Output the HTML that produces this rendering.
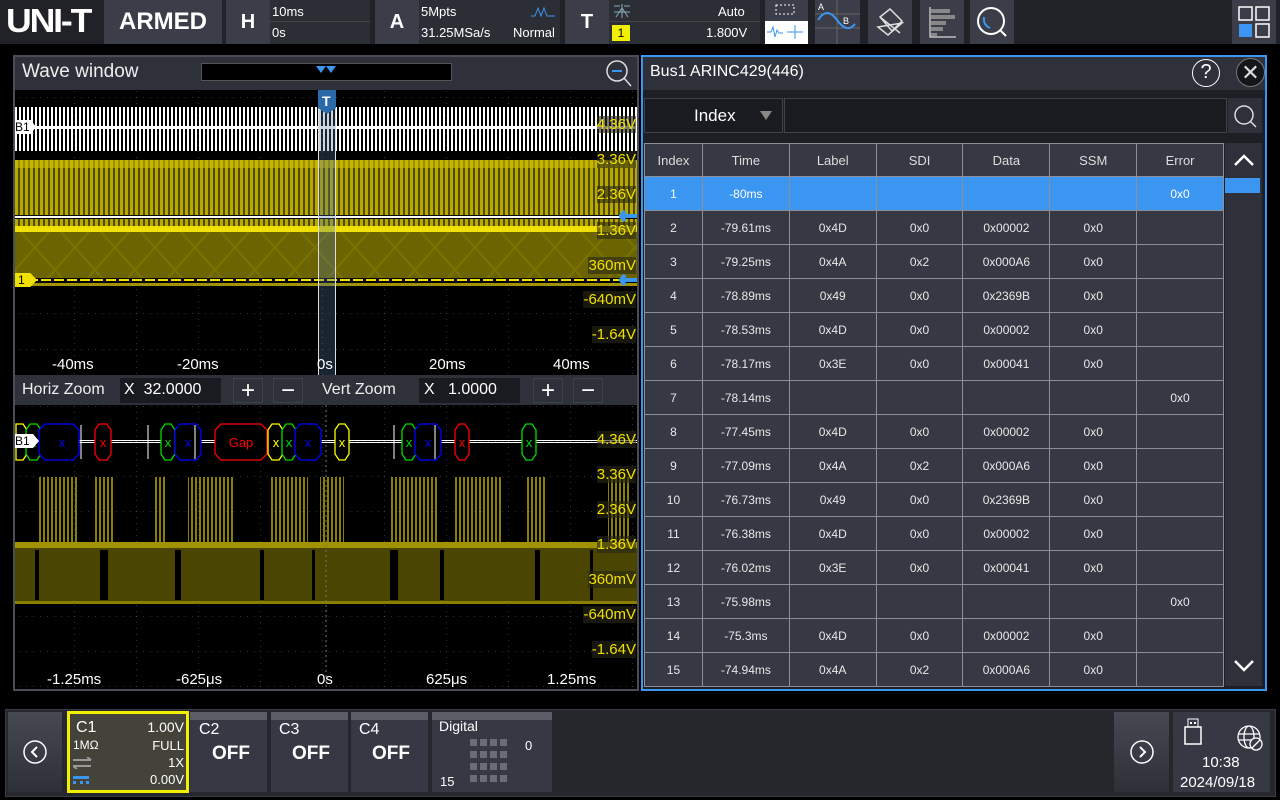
<!DOCTYPE html>
<html><head><meta charset="utf-8"><style>
*{margin:0;padding:0;box-sizing:border-box}
body{width:1280px;height:800px;background:#000;font-family:"Liberation Sans",sans-serif;color:#fff;position:relative;overflow:hidden}
.a{position:absolute}
.blk{position:absolute;background:#2c2e36}
.btn{position:absolute;background:#3b3e48;display:flex;align-items:center;justify-content:center}
.t{position:absolute;white-space:nowrap}
table{border-collapse:collapse;position:absolute;left:644px;top:143px;width:580px}
td{border:1px solid #8c8f98;height:34px;text-align:center;font-size:12px;color:#e8e8e8;background:#363944}
tr.h td{background:#363944;font-size:13px;color:#ddd;height:33px}
tr.sel td{background:#3a96f0;color:#fff}
.yl{color:#f0e000;font-size:15px;background:rgba(40,40,20,.6)}
.off{position:absolute;top:712px;width:77px;height:80px;background:#363944;border-top:8px solid #5a5d66}
</style></head><body>
<!-- top bar -->
<div class="a" style="left:0;top:0;width:1280px;height:44px;background:#202228"></div>
<div class="t" style="left:6px;top:2px;font-size:33px;font-weight:bold;letter-spacing:-2px;transform:scaleX(1.08);transform-origin:left">UNI-T</div>
<div class="btn" style="left:104px;top:0;width:118px;height:44px;font-size:24px;font-weight:bold">ARMED</div>
<div class="btn" style="left:226px;top:0;width:44px;height:44px;font-size:20px;font-weight:bold">H</div>
<div class="blk" style="left:270px;top:0;width:100px;height:44px"></div>
<div class="a" style="left:270px;top:21px;width:100px;height:1px;background:#444"></div>
<div class="t" style="left:272px;top:4px;font-size:13px">10ms</div><div class="t" style="left:272px;top:25px;font-size:13px">0s</div>
<div class="btn" style="left:375px;top:0;width:44px;height:44px;font-size:20px;font-weight:bold">A</div>
<div class="blk" style="left:419px;top:0;width:141px;height:44px"></div>
<div class="t" style="left:421px;top:4px;font-size:13px">5Mpts</div><div class="t" style="left:421px;top:25px;font-size:13px">31.25MSa/s</div>
<div class="t" style="left:513px;top:25px;font-size:13px">Normal</div>
<svg class="a" style="left:530px;top:6px" width="26" height="12"><path d="M1 10H5L8 2L11 10L14 2L17 10H25" stroke="#3a96f0" fill="none"/></svg>
<div class="btn" style="left:565px;top:0;width:44px;height:44px;font-size:20px;font-weight:bold">T</div>
<div class="blk" style="left:609px;top:0;width:151px;height:44px"></div>
<div class="a" style="left:609px;top:21px;width:151px;height:1px;background:#444"></div>
<svg class="a" style="left:612px;top:3px" width="20" height="16"><path d="M2 3H8M12 3H18M10 1V15M2 9H18M4 14L10 5L16 14" stroke="#8ab" fill="none"/></svg>
<div class="a" style="left:612px;top:25px;width:18px;height:16px;background:#f0f000;color:#000;font-size:12px;text-align:center;line-height:16px">1</div>
<div class="t" style="left:718px;top:4px;font-size:13px">Auto</div><div class="t" style="left:706px;top:25px;font-size:13px">1.800V</div>
<div class="btn" style="left:765px;top:0;width:43px;height:44px"><svg width="43" height="44"><rect x="11" y="5" width="18" height="9" stroke="#fff" stroke-dasharray="2 2" fill="none"/><rect x="0" y="21" width="43" height="23" fill="#fff"/><path d="M2 32H6L8 27L10 37L12 30L14 33H18M22 32H38M30 25V39" stroke="#3a96f0" fill="none"/></svg></div>
<div class="btn" style="left:815px;top:0;width:45px;height:44px"><svg width="45" height="44"><path d="M0 14H45M0 28H45M22 0V44" stroke="#666"/><path d="M3 20Q12 6 22 20T40 24" stroke="#3a96f0" fill="none" stroke-width="2"/><text x="3" y="10" font-size="9" fill="#fff">A</text><text x="28" y="24" font-size="9" fill="#fff">B</text></svg></div>
<div class="btn" style="left:868px;top:0;width:44px;height:44px"><svg width="30" height="30"><path d="M5 10L15 2L27 14L17 24ZM3 20L13 28L27 16ZM5 10L25 26" stroke="#ddd" fill="none" stroke-width="1.5"/></svg></div>
<div class="btn" style="left:920px;top:0;width:44px;height:44px"><svg width="30" height="34"><path d="M3 2V32H29" stroke="#fff" fill="none"/><g fill="#888"><rect x="4" y="4" width="19" height="4"/><rect x="4" y="10" width="24" height="4"/><rect x="4" y="16" width="15" height="4"/><rect x="4" y="22" width="12" height="4"/><rect x="4" y="28" width="6" height="3"/></g></svg></div>
<div class="btn" style="left:970px;top:0;width:44px;height:44px"><svg width="34" height="34"><circle cx="16" cy="16" r="13" stroke="#fff" stroke-width="2" fill="none"/><path d="M25 25L31 31" stroke="#fff" stroke-width="2"/><path d="M9 12Q8 20 15 23" stroke="#3a96f0" stroke-width="2" fill="none"/></svg></div>
<div class="btn" style="left:1232px;top:0;width:44px;height:44px"><svg width="36" height="36"><rect x="3" y="3" width="13" height="13" stroke="#fff" fill="none" stroke-width="1.5"/><rect x="20" y="3" width="13" height="13" stroke="#fff" fill="none" stroke-width="1.5"/><rect x="3" y="20" width="13" height="13" fill="#3a96f0"/><rect x="20" y="20" width="13" height="13" stroke="#fff" fill="none" stroke-width="1.5"/></svg></div>

<!-- wave window -->
<div class="a" style="left:13px;top:55px;width:626px;height:636px;border:2px solid #4a4d56;background:#000"></div>
<div class="a" style="left:15px;top:57px;width:622px;height:33px;background:#2e313a"></div>
<div class="t" style="left:22px;top:61px;font-size:19px;color:#eee">Wave window</div>
<div class="a" style="left:201px;top:63px;width:251px;height:18px;background:#000;border:1px solid #555"></div>
<svg class="a" style="left:316px;top:66px" width="22" height="8"><path d="M0 0H10L5 7ZM10 0H20L15 7Z" fill="#3a96f0"/></svg>
<svg class="a" style="left:603px;top:58px" width="30" height="30"><circle cx="14" cy="13" r="10" stroke="#ddd" fill="none" stroke-width="1.5"/><path d="M21 20L28 28" stroke="#ddd" stroke-width="1.5"/><path d="M9 13H19" stroke="#3a96f0" stroke-width="2"/></svg>

<svg class="a" style="left:15px;top:90px" width="622" height="285">
<defs>
<pattern id="g" width="62" height="36" patternUnits="userSpaceOnUse" x="-3" y="7"><path d="M0 0V36" stroke="#666" stroke-dasharray="1 5"/><path d="M0 0H62" stroke="#666" stroke-dasharray="1 6"/></pattern>
<pattern id="w" width="4" height="10" patternUnits="userSpaceOnUse"><rect width="2" height="10" fill="#fff"/></pattern>
<pattern id="y" width="5" height="10" patternUnits="userSpaceOnUse"><rect width="3" height="10" fill="#b8a800"/></pattern>
<pattern id="x" width="40" height="45" patternUnits="userSpaceOnUse"><path d="M0 0L40 45M40 0L0 45" stroke="#8a8200" stroke-width="2"/></pattern>
</defs>
<rect width="622" height="285" fill="url(#g)"/>
<rect x="0" y="17" width="622" height="44" fill="url(#w)"/>
<rect x="0" y="36" width="622" height="3" fill="#fff"/>
<rect x="0" y="70" width="622" height="70" fill="#504a00"/>
<rect x="0" y="70" width="622" height="70" fill="url(#y)"/>
<rect x="0" y="70" width="622" height="8" fill="#d0c000" opacity=".6"/>
<rect x="0" y="125" width="622" height="4" fill="#000"/>
<rect x="0" y="126" width="622" height="2" fill="#fff"/>
<rect x="0" y="136" width="622" height="6" fill="#f0e000"/>
<rect x="0" y="142" width="622" height="48" fill="#6b6400"/>
<rect x="0" y="142" width="622" height="48" fill="url(#x)" opacity=".5"/>
<rect x="0" y="188" width="622" height="4" fill="#000"/>
<path d="M0 190H622" stroke="#f0e000" stroke-width="2" stroke-dasharray="10 3"/>
<rect x="0" y="193" width="622" height="3" fill="#a09200"/>
<rect x="303" y="0" width="18" height="285" fill="rgba(80,120,160,.3)"/>
<path d="M303.5 0V285M320.5 0V285" stroke="#ddd"/>
<path d="M303 0H321V18L312 24L303 18Z" fill="#2a6aa8"/>
<text x="307" y="16" font-size="14" fill="#fff" font-weight="bold">T</text>
<path d="M622 126H606M610 121L606 126L610 131" stroke="#3a96f0" stroke-width="4" fill="none"/>
<path d="M622 190H606M610 185L606 190L610 195" stroke="#3a96f0" stroke-width="4" fill="none"/>
</svg>
<div class="a" style="left:15px;top:120px;width:21px;height:14px;background:#fff;color:#000;font-size:12px;line-height:14px;clip-path:polygon(0 0,75% 0,100% 50%,75% 100%,0 100%)">B1</div>
<div class="a" style="left:15px;top:273px;width:22px;height:14px;background:#f0e000;color:#000;font-size:12px;line-height:14px;padding-left:3px;clip-path:polygon(0 0,70% 0,100% 50%,70% 100%,0 100%)">1</div>
<div class="t yl" style="right:644px;top:116px">4.36V</div>
<div class="t yl" style="right:644px;top:151px">3.36V</div>
<div class="t yl" style="right:644px;top:186px">2.36V</div>
<div class="t yl" style="right:644px;top:222px">1.36V</div>
<div class="t yl" style="right:644px;top:257px">360mV</div>
<div class="t yl" style="right:644px;top:291px">-640mV</div>
<div class="t yl" style="right:644px;top:326px">-1.64V</div>
<div class="t" style="left:52px;top:356px;font-size:15px">-40ms</div>
<div class="t" style="left:177px;top:356px;font-size:15px">-20ms</div>
<div class="t" style="left:317px;top:356px;font-size:15px">0s</div>
<div class="t" style="left:429px;top:356px;font-size:15px">20ms</div>
<div class="t" style="left:553px;top:356px;font-size:15px">40ms</div>

<!-- zoom bar -->
<div class="a" style="left:15px;top:375px;width:622px;height:30px;background:#2e313a"></div>
<div class="t" style="left:22px;top:381px;font-size:16px;color:#eee">Horiz Zoom</div>
<div class="a" style="left:120px;top:378px;width:101px;height:25px;background:#1a1b20"></div>
<div class="t" style="left:124px;top:381px;font-size:16px">X&nbsp;&nbsp;32.0000</div>
<div class="btn" style="left:233px;top:378px;width:30px;height:25px;font-size:24px;background:#2e313a;border:1px solid #3f424b">+</div>
<div class="btn" style="left:273px;top:378px;width:30px;height:25px;font-size:24px;background:#2e313a;border:1px solid #3f424b">−</div>
<div class="t" style="left:322px;top:381px;font-size:16px;color:#eee">Vert Zoom</div>
<div class="a" style="left:419px;top:378px;width:101px;height:25px;background:#1a1b20"></div>
<div class="t" style="left:424px;top:381px;font-size:16px">X&nbsp;&nbsp;&nbsp;1.0000</div>
<div class="btn" style="left:533px;top:378px;width:30px;height:25px;font-size:24px;background:#2e313a;border:1px solid #3f424b">+</div>
<div class="btn" style="left:573px;top:378px;width:30px;height:25px;font-size:24px;background:#2e313a;border:1px solid #3f424b">−</div>

<svg class="a" style="left:15px;top:405px" width="622" height="285">
<defs>
<pattern id="g2" width="62" height="35" patternUnits="userSpaceOnUse" x="-3" y="1"><path d="M0 0V35" stroke="#666" stroke-dasharray="1 5"/><path d="M0 0H62" stroke="#666" stroke-dasharray="1 6"/></pattern>
<pattern id="y2" width="4" height="10" patternUnits="userSpaceOnUse"><rect width="2" height="10" fill="#8a8000"/></pattern>
</defs>
<rect width="622" height="285" fill="url(#g2)"/>
<path d="M0 35.5H622M0 37.5H622" stroke="#fff"/>
<g fill="#000" stroke-width="1.3">
<polygon points="1,19 8,19 12,25 12,49 8,55 1,55" stroke="#ff0"/>
<polygon points="15,19 22,19 26,25 26,49 22,55 15,55 11,49 11,25" stroke="#0d0"/>
<polygon points="30,19 58,19 64,25 64,49 58,55 30,55 24,49 24,25" stroke="#00f"/>
<polygon points="84,19 92,19 96,25 96,49 92,55 84,55 80,49 80,25" stroke="#f00"/>
<polygon points="150,19 156,19 160,25 160,49 156,55 150,55 146,49 146,25" stroke="#0d0"/>
<polygon points="165,19 181,19 186,25 186,49 181,55 165,55 160,49 160,25" stroke="#00f"/>
<polygon points="206,19 246,19 252,25 252,49 246,55 206,55 200,49 200,25" stroke="#f00"/>
<polygon points="257,19 264,19 268,25 268,49 264,55 257,55 253,49 253,25" stroke="#ff0"/>
<polygon points="271,19 277,19 281,25 281,49 277,55 271,55 267,49 267,25" stroke="#0d0"/>
<polygon points="285,19 301,19 306,25 306,49 301,55 285,55 280,49 280,25" stroke="#00f"/>
<polygon points="324,19 330,19 334,25 334,49 330,55 324,55 320,49 320,25" stroke="#ff0"/>
<polygon points="391,19 397,19 401,25 401,49 397,55 391,55 387,49 387,25" stroke="#0d0"/>
<polygon points="405,19 421,19 426,25 426,49 421,55 405,55 400,49 400,25" stroke="#00f"/>
<polygon points="444,19 450,19 454,25 454,49 450,55 444,55 440,49 440,25" stroke="#f00"/>
<polygon points="511,19 517,19 521,25 521,49 517,55 511,55 507,49 507,25" stroke="#0d0"/>
</g>
<g font-size="13" text-anchor="middle">
<text x="18" y="42" fill="#0d0">x</text><text x="47" y="42" fill="#00f">x</text><text x="88" y="42" fill="#f00">x</text>
<text x="153" y="42" fill="#0d0">x</text><text x="173" y="42" fill="#00f">x</text><text x="226" y="42" fill="#f00">Gap</text>
<text x="261" y="42" fill="#ff0">x</text><text x="274" y="42" fill="#0d0">x</text><text x="293" y="42" fill="#00f">x</text>
<text x="327" y="42" fill="#ff0">x</text><text x="394" y="42" fill="#0d0">x</text><text x="413" y="42" fill="#00f">x</text>
<text x="447" y="42" fill="#f00">x</text><text x="514" y="42" fill="#0d0">x</text>
</g>
<path d="M66 20V54M133 20V54M180 20V54M379 20V54M420 20V54" stroke="#fff"/>
<g fill="url(#y2)">
<rect x="22" y="72" width="40" height="70"/><rect x="80" y="72" width="20" height="70"/><rect x="138" y="72" width="12" height="70"/>
<rect x="173" y="72" width="36" height="70"/><rect x="192" y="72" width="28" height="70"/><rect x="255" y="72" width="38" height="70"/>
<rect x="305" y="72" width="24" height="70"/><rect x="374" y="72" width="48" height="70"/><rect x="440" y="72" width="46" height="70"/>
<rect x="510" y="72" width="22" height="70"/><rect x="593" y="72" width="22" height="70"/>
</g>
<rect x="0" y="137" width="622" height="6" fill="#a09200"/>
<rect x="0" y="143" width="622" height="55" fill="#4a4500"/>
<g fill="#000"><rect x="20" y="145" width="4" height="50"/><rect x="85" y="145" width="8" height="50"/><rect x="160" y="145" width="6" height="50"/><rect x="245" y="145" width="4" height="50"/><rect x="297" y="145" width="3" height="50"/><rect x="375" y="145" width="8" height="50"/><rect x="425" y="145" width="4" height="50"/><rect x="520" y="145" width="5" height="50"/><rect x="575" y="145" width="3" height="50"/></g>
<rect x="0" y="196" width="622" height="3" fill="#8a8000"/>
<path d="M311 0V285" stroke="#777" stroke-dasharray="2 3"/>
</svg>
<div class="a" style="left:15px;top:434px;width:24px;height:14px;background:#fff;color:#000;font-size:12px;line-height:14px;clip-path:polygon(0 0,75% 0,100% 50%,75% 100%,0 100%)">B1</div>
<div class="t yl" style="right:644px;top:431px">4.36V</div>
<div class="t yl" style="right:644px;top:466px">3.36V</div>
<div class="t yl" style="right:644px;top:501px">2.36V</div>
<div class="t yl" style="right:644px;top:536px">1.36V</div>
<div class="t yl" style="right:644px;top:571px">360mV</div>
<div class="t yl" style="right:644px;top:606px">-640mV</div>
<div class="t yl" style="right:644px;top:641px">-1.64V</div>
<div class="t" style="left:47px;top:671px;font-size:15px">-1.25ms</div>
<div class="t" style="left:176px;top:671px;font-size:15px">-625μs</div>
<div class="t" style="left:317px;top:671px;font-size:15px">0s</div>
<div class="t" style="left:426px;top:671px;font-size:15px">625μs</div>
<div class="t" style="left:547px;top:671px;font-size:15px">1.25ms</div>

<!-- right panel -->
<div class="a" style="left:641px;top:55px;width:626px;height:636px;border:2px solid #3a96f0;background:#1e1f25"></div>
<div class="a" style="left:643px;top:57px;width:622px;height:33px;background:#2e313a"></div>
<div class="t" style="left:650px;top:63px;font-size:16px">Bus1 ARINC429(446)</div>
<div class="a" style="left:1192px;top:59px;width:28px;height:28px;border:1.5px solid #fff;border-radius:50%;text-align:center;font-size:20px;line-height:25px">?</div>
<div class="a" style="left:1236px;top:58px;width:29px;height:29px;border:1px solid #777;border-radius:50%;background:#15161a;text-align:center;font-size:22px;line-height:27px;color:#ddd">✕</div>
<div class="a" style="left:644px;top:98px;width:139px;height:35px;background:#1a1b20;border:1px solid #3f424b"></div>
<div class="t" style="left:694px;top:106px;font-size:17px">Index</div>
<svg class="a" style="left:760px;top:111px" width="12" height="9"><path d="M0 0H12L6 9Z" fill="#888"/></svg>
<div class="a" style="left:784px;top:98px;width:443px;height:35px;background:#1a1b20;border:1px solid #3f424b"></div>
<div class="btn" style="left:1228px;top:98px;width:34px;height:35px;background:#2e313a"><svg width="26" height="26"><circle cx="12" cy="12" r="9" stroke="#ddd" fill="none" stroke-width="1.5"/><path d="M18 18L24 24" stroke="#ddd" stroke-width="1.5"/></svg></div>
<table>
<colgroup><col style="width:58px"><col style="width:87px"><col style="width:87px"><col style="width:87px"><col style="width:87px"><col style="width:87px"><col style="width:87px"></colgroup>
<tr class="h"><td style="height:32px">Index</td><td>Time</td><td>Label</td><td>SDI</td><td>Data</td><td>SSM</td><td>Error</td></tr>
<tr class="sel"><td>1</td><td>-80ms</td><td></td><td></td><td></td><td></td><td>0x0</td></tr>
<tr><td>2</td><td>-79.61ms</td><td>0x4D</td><td>0x0</td><td>0x00002</td><td>0x0</td><td></td></tr>
<tr><td>3</td><td>-79.25ms</td><td>0x4A</td><td>0x2</td><td>0x000A6</td><td>0x0</td><td></td></tr>
<tr><td>4</td><td>-78.89ms</td><td>0x49</td><td>0x0</td><td>0x2369B</td><td>0x0</td><td></td></tr>
<tr><td>5</td><td>-78.53ms</td><td>0x4D</td><td>0x0</td><td>0x00002</td><td>0x0</td><td></td></tr>
<tr><td>6</td><td>-78.17ms</td><td>0x3E</td><td>0x0</td><td>0x00041</td><td>0x0</td><td></td></tr>
<tr><td>7</td><td>-78.14ms</td><td></td><td></td><td></td><td></td><td>0x0</td></tr>
<tr><td>8</td><td>-77.45ms</td><td>0x4D</td><td>0x0</td><td>0x00002</td><td>0x0</td><td></td></tr>
<tr><td>9</td><td>-77.09ms</td><td>0x4A</td><td>0x2</td><td>0x000A6</td><td>0x0</td><td></td></tr>
<tr><td>10</td><td>-76.73ms</td><td>0x49</td><td>0x0</td><td>0x2369B</td><td>0x0</td><td></td></tr>
<tr><td>11</td><td>-76.38ms</td><td>0x4D</td><td>0x0</td><td>0x00002</td><td>0x0</td><td></td></tr>
<tr><td>12</td><td>-76.02ms</td><td>0x3E</td><td>0x0</td><td>0x00041</td><td>0x0</td><td></td></tr>
<tr><td>13</td><td>-75.98ms</td><td></td><td></td><td></td><td></td><td>0x0</td></tr>
<tr><td>14</td><td>-75.3ms</td><td>0x4D</td><td>0x0</td><td>0x00002</td><td>0x0</td><td></td></tr>
<tr><td>15</td><td>-74.94ms</td><td>0x4A</td><td>0x2</td><td>0x000A6</td><td>0x0</td><td></td></tr>
</table>
<div class="a" style="left:1225px;top:143px;width:37px;height:543px;background:#2e313a"></div>
<svg class="a" style="left:1232px;top:150px" width="24" height="20"><path d="M3 15L12 6L21 15" stroke="#fff" stroke-width="2.5" fill="none"/></svg>
<div class="a" style="left:1225px;top:178px;width:35px;height:15px;background:#3a96f0"></div>
<svg class="a" style="left:1232px;top:656px" width="24" height="20"><path d="M3 5L12 14L21 5" stroke="#fff" stroke-width="2.5" fill="none"/></svg>

<!-- bottom bar -->
<div class="a" style="left:5px;top:709px;width:1271px;height:88px;background:#25272d;border:1px solid #3a3c44"></div>
<div class="btn" style="left:8px;top:712px;width:54px;height:80px;background:linear-gradient(#464952,#2e3038)"><svg width="26" height="26"><circle cx="13" cy="13" r="11" stroke="#fff" fill="none" stroke-width="1.5"/><path d="M15 8L10 13L15 18" stroke="#fff" stroke-width="2" fill="none"/></svg></div>
<div class="a" style="left:67px;top:711px;width:122px;height:82px;background:#44433a;border:3px solid #f0f000"></div>
<div class="t" style="left:76px;top:719px;font-size:16px">C1</div>
<div class="t" style="right:1096px;top:719px;font-size:14px">1.00V</div>
<div class="t" style="left:73px;top:738px;font-size:12px">1MΩ</div>
<div class="t" style="right:1096px;top:738px;font-size:13px">FULL</div>
<div class="t" style="right:1096px;top:755px;font-size:13px">1X</div>
<div class="t" style="right:1096px;top:772px;font-size:13px">0.00V</div>
<svg class="a" style="left:73px;top:757px" width="20" height="12"><path d="M0 3H18M14 0L18 3M0 9H18M0 9L4 12" stroke="#999" stroke-width="2" fill="none"/></svg>
<div class="a" style="left:73px;top:776px;width:16px;height:3px;background:#3a96f0"></div>
<div class="a" style="left:73px;top:781px;width:16px;height:3px;border-top:3px dotted #3a96f0"></div>
<div class="off" style="left:190px"><div class="t" style="left:9px;top:1px;font-size:16px">C2</div><div class="t" style="left:22px;top:23px;font-size:19px;font-weight:bold">OFF</div></div>
<div class="off" style="left:271px"><div class="t" style="left:8px;top:1px;font-size:16px">C3</div><div class="t" style="left:21px;top:23px;font-size:19px;font-weight:bold">OFF</div></div>
<div class="off" style="left:351px"><div class="t" style="left:8px;top:1px;font-size:16px">C4</div><div class="t" style="left:21px;top:23px;font-size:19px;font-weight:bold">OFF</div></div>
<div class="off" style="left:432px;width:120px"><div class="t" style="left:7px;top:-2px;font-size:14px">Digital</div><div class="t" style="left:93px;top:18px;font-size:13px">0</div><div class="t" style="left:8px;top:54px;font-size:13px">15</div>
<svg class="a" style="left:38px;top:19px" width="40" height="52"><g fill="#6a6d76"><rect x="0" y="0" width="7" height="7"/><rect x="10" y="0" width="7" height="7"/><rect x="20" y="0" width="7" height="7"/><rect x="30" y="0" width="7" height="7"/><rect x="0" y="12" width="7" height="7"/><rect x="10" y="12" width="7" height="7"/><rect x="20" y="12" width="7" height="7"/><rect x="30" y="12" width="7" height="7"/><rect x="0" y="24" width="7" height="7"/><rect x="10" y="24" width="7" height="7"/><rect x="20" y="24" width="7" height="7"/><rect x="30" y="24" width="7" height="7"/><rect x="0" y="36" width="7" height="7"/><rect x="10" y="36" width="7" height="7"/><rect x="20" y="36" width="7" height="7"/><rect x="30" y="36" width="7" height="7"/></g></svg></div>
<div class="btn" style="left:1114px;top:712px;width:55px;height:80px;background:linear-gradient(#464952,#2e3038)"><svg width="26" height="26"><circle cx="13" cy="13" r="11" stroke="#fff" fill="none" stroke-width="1.5"/><path d="M11 8L16 13L11 18" stroke="#fff" stroke-width="2" fill="none"/></svg></div>
<div class="a" style="left:1173px;top:712px;width:97px;height:80px;background:#363944"></div>
<svg class="a" style="left:1184px;top:718px" width="20" height="28"><rect x="4" y="1" width="10" height="8" stroke="#fff" fill="none"/><rect x="1" y="9" width="16" height="17" stroke="#fff" fill="none" stroke-width="1.5"/><rect x="6" y="4" width="2" height="2" fill="#fff"/><rect x="10" y="4" width="2" height="2" fill="#fff"/></svg>
<svg class="a" style="left:1236px;top:724px" width="28" height="28"><circle cx="13" cy="13" r="11" stroke="#fff" fill="none" stroke-width="1.3"/><ellipse cx="13" cy="13" rx="5" ry="11" stroke="#fff" fill="none" stroke-width="1.3"/><path d="M2 10H24M2 16H24" stroke="#fff" stroke-width="1.3"/><circle cx="20" cy="20" r="6" fill="#363944" stroke="#fff" stroke-width="1.3"/><path d="M16 24L24 16" stroke="#fff" stroke-width="1.3"/></svg>
<div class="t" style="left:1202px;top:754px;font-size:15px">10:38</div>
<div class="t" style="left:1180px;top:774px;font-size:15px">2024/09/18</div>
</body></html>
